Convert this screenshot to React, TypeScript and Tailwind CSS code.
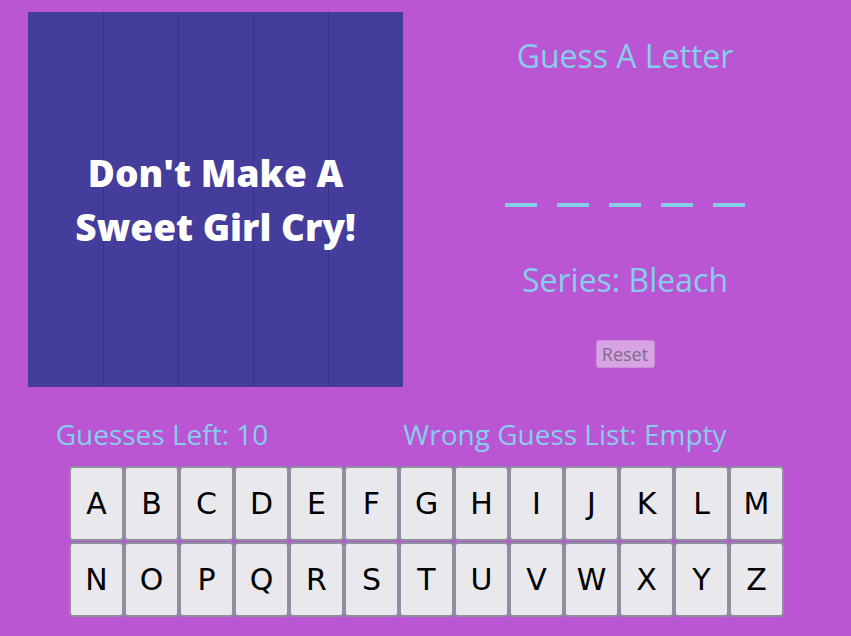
import React from 'react';

const ROW1 = 'ABCDEFGHIJKLM'.split('');
const ROW2 = 'NOPQRSTUVWXYZ'.split('');

function Key({ letter }: { letter: string }) {
  return (
    <button className="w-[55px] h-[75px] bg-[#e9e9ed] border-2 border-[#8f8f9d] rounded-[4px] flex items-center justify-center text-[30px] text-black font-['DejaVu_Sans',sans-serif]">
      {letter}
    </button>
  );
}

export default function App() {
  const word = ['', '', '', '', ''];
  return (
    <div className="w-[851px] h-[636px] bg-[#ba55d3] font-['Open_Sans',sans-serif] overflow-hidden">
      <div className="flex pt-[12px]">
        <div className="ml-[28px] w-[375px] h-[375px] bg-[#453d9b] grid grid-cols-5 relative">
          {[0, 1, 2, 3, 4].map((i) => (
            <div key={i} className={i === 0 ? '' : 'border-l border-[#3a3188]'} />
          ))}
          <div className="absolute inset-0 flex items-center justify-center">
            <p className="text-white font-extrabold text-[37px] leading-[54px] text-center">
              Don't Make A
              <br />
              Sweet Girl Cry!
            </p>
          </div>
        </div>
        <div className="flex-1 flex flex-col items-center text-[#87ceeb] pr-[4px]">
          <h2 className="mt-[24px] text-[32px] leading-[40px]">Guess A Letter</h2>
          <div className="mt-[127px] flex gap-[20px]">
            {word.map((_, i) => (
              <span key={i} className="block w-[32px] h-[4px] bg-[#87ceeb]" />
            ))}
          </div>
          <p className="mt-[53px] text-[32px] leading-[40px]">Series: Bleach</p>
          <button className="mt-[40px] w-[59px] h-[28px] rounded-[3px] bg-[#d9a2e4] border border-[#c98fd6] text-[#7d6f84] text-[18px] leading-none">
            Reset
          </button>
        </div>
      </div>
      <div className="flex text-[#87ceeb] text-[28px] leading-[40px] mt-[27px]">
        <div className="w-[324px] text-center">Guesses Left: 10</div>
        <div className="w-[482px] text-center">Wrong Guess List: Empty</div>
      </div>
      <div className="ml-[69px] mt-[12px] flex flex-col gap-[1px]">
        <div className="flex">
          {ROW1.map((l) => (
            <Key key={l} letter={l} />
          ))}
        </div>
        <div className="flex">
          {ROW2.map((l) => (
            <Key key={l} letter={l} />
          ))}
        </div>
      </div>
    </div>
  );
}
